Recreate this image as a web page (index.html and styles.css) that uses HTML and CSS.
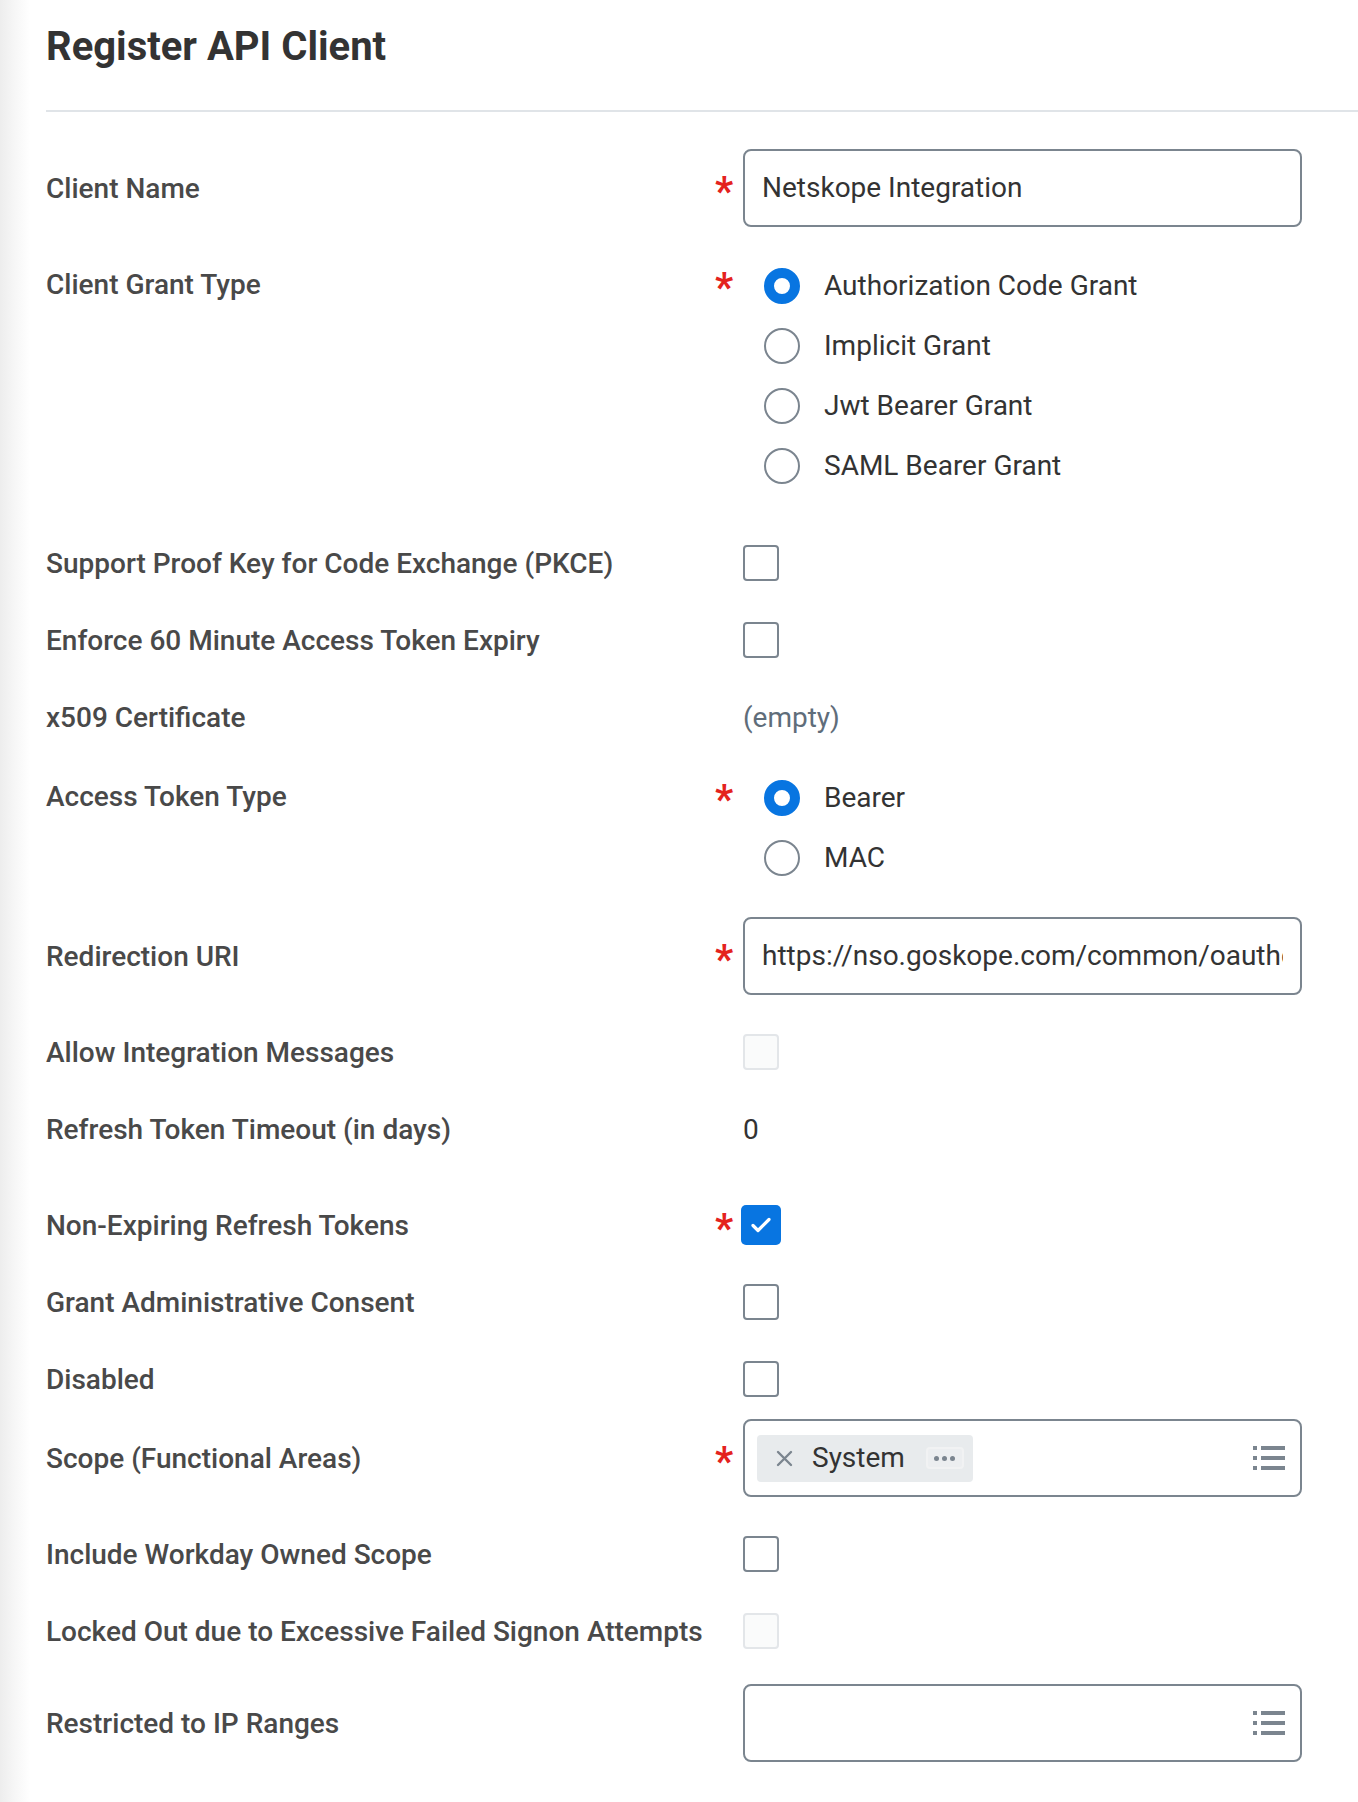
FILE: index.html
```html
<!DOCTYPE html>
<html lang="en">
<head>
<meta charset="utf-8">
<title>Register API Client</title>
<link rel="stylesheet" href="styles.css">
</head>
<body>
<div class="page">
  <h1 class="title">Register API Client</h1>
  <div class="divider"></div>

  <div class="fields">
    <div class="field field--input">
      <div class="label">Client Name</div>
      <div class="req">*</div>
      <div class="control"><div class="textbox"><span class="textbox-value">Netskope Integration</span></div></div>
    </div>

    <div class="field">
      <div class="label">Client Grant Type</div>
      <div class="req">*</div>
      <div class="control radios">
        <div class="radio-item"><span class="radio radio--on"></span><span class="radio-text">Authorization Code Grant</span></div>
        <div class="radio-item"><span class="radio"></span><span class="radio-text">Implicit Grant</span></div>
        <div class="radio-item"><span class="radio"></span><span class="radio-text">Jwt Bearer Grant</span></div>
        <div class="radio-item"><span class="radio"></span><span class="radio-text">SAML Bearer Grant</span></div>
      </div>
    </div>

    <div class="field sp-57">
      <div class="label">Support Proof Key for Code Exchange (PKCE)</div>
      <div class="req"></div>
      <div class="control"><span class="check"></span></div>
    </div>

    <div class="field">
      <div class="label">Enforce 60 Minute Access Token Expiry</div>
      <div class="req"></div>
      <div class="control"><span class="check"></span></div>
    </div>

    <div class="field">
      <div class="label">x509 Certificate</div>
      <div class="req"></div>
      <div class="control"><span class="value value--empty">(empty)</span></div>
    </div>

    <div class="field sp-39">
      <div class="label">Access Token Type</div>
      <div class="req">*</div>
      <div class="control radios">
        <div class="radio-item"><span class="radio radio--on"></span><span class="radio-text">Bearer</span></div>
        <div class="radio-item"><span class="radio"></span><span class="radio-text">MAC</span></div>
      </div>
    </div>

    <div class="field field--input sp-39">
      <div class="label">Redirection URI</div>
      <div class="req">*</div>
      <div class="control"><div class="textbox"><span class="textbox-value">https://nso.goskope.com/common/oauthcallback</span></div></div>
    </div>

    <div class="field">
      <div class="label">Allow Integration Messages</div>
      <div class="req"></div>
      <div class="control"><span class="check check--disabled"></span></div>
    </div>

    <div class="field">
      <div class="label">Refresh Token Timeout (in days)</div>
      <div class="req"></div>
      <div class="control"><span class="value">0</span></div>
    </div>

    <div class="field sp-56">
      <div class="label">Non-Expiring Refresh Tokens</div>
      <div class="req">*</div>
      <div class="control">
        <span class="check check--on">
          <svg width="22" height="18" viewBox="0 0 22 18"><path d="M3 9.5l5 5L19 3.5" fill="none" stroke="#fff" stroke-width="3.2" stroke-linecap="round" stroke-linejoin="round"/></svg>
        </span>
      </div>
    </div>

    <div class="field">
      <div class="label">Grant Administrative Consent</div>
      <div class="req"></div>
      <div class="control"><span class="check"></span></div>
    </div>

    <div class="field">
      <div class="label">Disabled</div>
      <div class="req"></div>
      <div class="control"><span class="check"></span></div>
    </div>

    <div class="field field--input sp-20">
      <div class="label">Scope (Functional Areas)</div>
      <div class="req">*</div>
      <div class="control">
        <div class="textbox textbox--multi">
          <span class="chip">
            <svg class="chip-x" width="17" height="17" viewBox="0 0 17 17"><path d="M2 2l13 13M15 2L2 15" stroke="#7b858f" stroke-width="2.4" stroke-linecap="round"/></svg>
            <span class="chip-text">System</span>
            <span class="chip-more"><i></i><i></i><i></i></span>
          </span>
          <svg class="list-icon" width="32" height="24" viewBox="0 0 32 24"><rect x="0" y="0" width="4" height="4" fill="#7b858f"/><rect x="8" y="0" width="24" height="4" fill="#7b858f"/><rect x="0" y="10" width="4" height="4" fill="#7b858f"/><rect x="8" y="10" width="24" height="4" fill="#7b858f"/><rect x="0" y="20" width="4" height="4" fill="#7b858f"/><rect x="8" y="20" width="24" height="4" fill="#7b858f"/></svg>
        </div>
      </div>
    </div>

    <div class="field">
      <div class="label">Include Workday Owned Scope</div>
      <div class="req"></div>
      <div class="control"><span class="check"></span></div>
    </div>

    <div class="field">
      <div class="label">Locked Out due to Excessive Failed Signon Attempts</div>
      <div class="req"></div>
      <div class="control"><span class="check check--disabled"></span></div>
    </div>

    <div class="field field--input sp-33">
      <div class="label">Restricted to IP Ranges</div>
      <div class="req"></div>
      <div class="control">
        <div class="textbox textbox--multi">
          <span class="spacer"></span>
          <svg class="list-icon" width="32" height="24" viewBox="0 0 32 24"><rect x="0" y="0" width="4" height="4" fill="#7b858f"/><rect x="8" y="0" width="24" height="4" fill="#7b858f"/><rect x="0" y="10" width="4" height="4" fill="#7b858f"/><rect x="8" y="10" width="24" height="4" fill="#7b858f"/><rect x="0" y="20" width="4" height="4" fill="#7b858f"/><rect x="8" y="20" width="24" height="4" fill="#7b858f"/></svg>
        </div>
      </div>
    </div>
  </div>
</div>
</body>
</html>
```

FILE: styles.css
```css
* { box-sizing: border-box; }

html, body {
  margin: 0;
  padding: 0;
}

body {
  background: linear-gradient(90deg, #ededed 0px, #f6f6f6 14px, #ffffff 30px);
  min-height: 1802px;
  font-family: Roboto, "Liberation Sans", Arial, sans-serif;
  color: #333333;
}

.page {
  padding-left: 46px;
  padding-bottom: 40px;
}

.title {
  margin: 0;
  padding-top: 23px;
  font-size: 40px;
  line-height: 48px;
  font-weight: 700;
  color: #333333;
  height: 110px;
}

.divider {
  height: 2px;
  background: #e0e4e8;
}

.fields {
  display: flex;
  flex-direction: column;
}

.field {
  display: grid;
  grid-template-columns: 669px 28px 559px;
  align-items: start;
  margin-top: 37px;
}

.field--input {
  align-items: center;
}

.sp-57 { margin-top: 57px; }
.sp-39 { margin-top: 39px; }
.sp-56 { margin-top: 56px; }
.sp-20 { margin-top: 20px; }
.sp-33 { margin-top: 33px; }

.label {
  font-size: 28px;
  font-weight: 500;
  line-height: 42px;
  margin-bottom: -2px;
  color: #494949;
  white-space: nowrap;
}

.req {
  color: #e4221d;
  font-size: 40px;
  font-weight: 700;
  line-height: 40px;
  height: 40px;
  padding-top: 4px;
  overflow: visible;
}

.control {
  min-height: 40px;
  display: flex;
  align-items: center;
}

.textbox {
  width: 559px;
  height: 78px;
  border: 2px solid #7b858f;
  border-radius: 8px;
  padding: 0 17px;
  font-size: 28px;
  line-height: 74px;
  color: #333333;
  background: #fff;
}

.textbox-value {
  display: block;
  white-space: nowrap;
  overflow: hidden;
}

.textbox--multi {
  display: flex;
  align-items: center;
  justify-content: space-between;
  padding: 0 15px 0 12px;
}

.spacer { flex: 1; }

.radios {
  flex-direction: column;
  align-items: flex-start;
  gap: 20px;
  padding-left: 21px;
  padding-top: 2px;
}

.radio-item {
  height: 40px;
  display: flex;
  align-items: center;
  gap: 24px;
}

.radio {
  width: 36px;
  height: 36px;
  border-radius: 50%;
  border: 2px solid #7b858f;
  background: #fff;
  flex: none;
}

.radio--on {
  border: 10px solid #0875e1;
}

.radio-text {
  font-size: 28px;
  color: #333333;
  line-height: 40px;
}

.check {
  width: 36px;
  height: 36px;
  border: 2px solid #7b858f;
  border-radius: 4px;
  background: #fff;
  display: flex;
  align-items: center;
  justify-content: center;
}

.check--disabled {
  border-color: #e3e6e9;
  background: #fafbfb;
}

.check--on {
  width: 40px;
  height: 40px;
  margin-left: -2px;
  border: none;
  background: #0875e1;
  border-radius: 5px;
}

.value {
  font-size: 28px;
  line-height: 42px;
  margin-bottom: -2px;
  color: #333333;
}

.value--empty {
  color: #5f6d7a;
}

.chip {
  display: flex;
  align-items: center;
  height: 47px;
  width: 216px;
  background: #e8ebed;
  border-radius: 4px;
  padding-left: 19px;
}

.chip-x { flex: none; }

.chip-text {
  margin-left: 19px;
  font-size: 28px;
  color: #333333;
}

.chip-more {
  margin-left: 21px;
  width: 38px;
  height: 22px;
  border: 2px solid #f1f2f3;
  border-radius: 4px;
  background: #eceef0;
  display: flex;
  align-items: center;
  justify-content: center;
  gap: 3px;
}

.chip-more i {
  width: 5px;
  height: 5px;
  border-radius: 50%;
  background: #7b858f;
}

.list-icon { flex: none; }
```
